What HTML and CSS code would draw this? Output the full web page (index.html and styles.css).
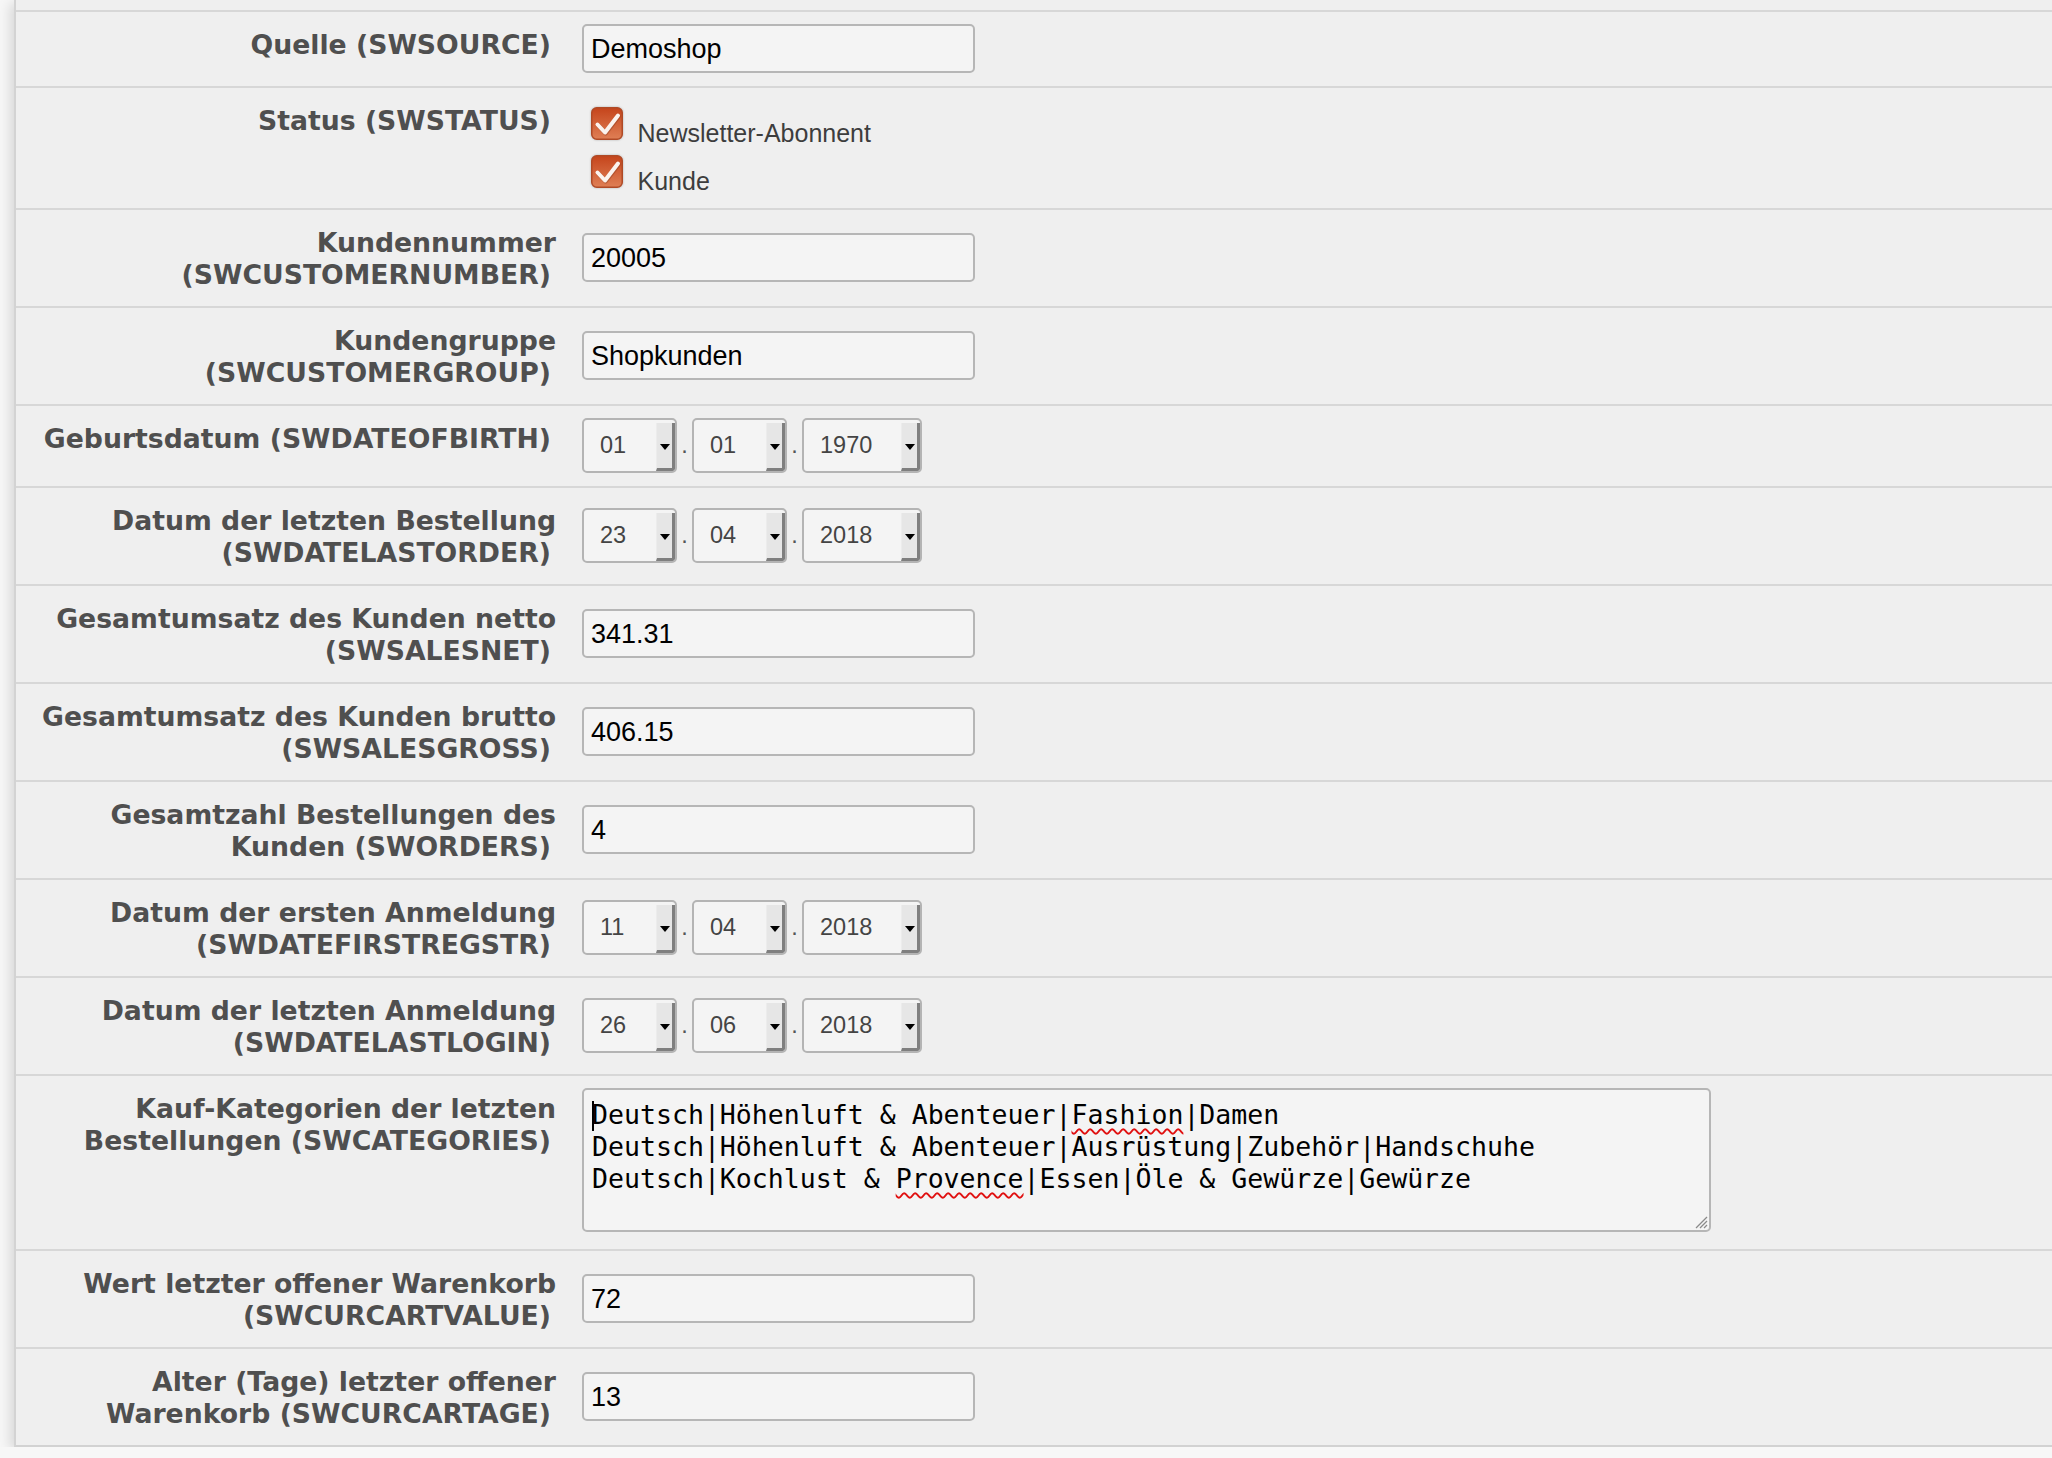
FILE: index.html
```html
<!DOCTYPE html>
<html lang="de">
<head>
<meta charset="utf-8">
<title>Kundenattribute</title>
<link rel="stylesheet" href="styles.css">
</head>
<body>
<div class="panel">
  <div class="row">
    <div class="lbl"><span>Quelle (SWSOURCE)</span></div>
    <div class="field"><input class="inp" type="text" value="Demoshop" readonly></div>
  </div>
  <div class="row">
    <div class="lbl"><span>Status (SWSTATUS)</span></div>
    <div class="field checks">
      <div class="check">
        <svg class="cb" viewBox="0 0 32 33"><defs><linearGradient id="cbg" x1="0" y1="0" x2="0" y2="1"><stop offset="0" stop-color="#c5441b"/><stop offset="1" stop-color="#df7f55"/></linearGradient></defs><rect x="0.75" y="0.75" width="30.5" height="31.5" rx="5" fill="url(#cbg)" stroke="#b04a26" stroke-width="1.5"/><path d="M6.5 17.5 L14 25.5 L27 8.5" fill="none" stroke="#7a3418" stroke-opacity="0.35" stroke-width="4.5" stroke-linecap="round" stroke-linejoin="round" transform="translate(0.6 0.8)"/><path d="M6.5 17.5 L14 25.5 L27 8.5" fill="none" stroke="#fbf3ee" stroke-width="4" stroke-linecap="round" stroke-linejoin="round"/></svg>
        <span class="ctext">Newsletter-Abonnent</span>
      </div>
      <div class="check">
        <svg class="cb" viewBox="0 0 32 33"><rect x="0.75" y="0.75" width="30.5" height="31.5" rx="5" fill="url(#cbg)" stroke="#b04a26" stroke-width="1.5"/><path d="M6.5 17.5 L14 25.5 L27 8.5" fill="none" stroke="#7a3418" stroke-opacity="0.35" stroke-width="4.5" stroke-linecap="round" stroke-linejoin="round" transform="translate(0.6 0.8)"/><path d="M6.5 17.5 L14 25.5 L27 8.5" fill="none" stroke="#fbf3ee" stroke-width="4" stroke-linecap="round" stroke-linejoin="round"/></svg>
        <span class="ctext">Kunde</span>
      </div>
    </div>
  </div>
  <div class="row">
    <div class="lbl"><span>Kundennummer (SWCUSTOMERNUMBER)</span></div>
    <div class="field"><input class="inp" type="text" value="20005" readonly></div>
  </div>
  <div class="row">
    <div class="lbl"><span>Kundengruppe (SWCUSTOMERGROUP)</span></div>
    <div class="field"><input class="inp" type="text" value="Shopkunden" readonly></div>
  </div>
  <div class="row">
    <div class="lbl"><span>Geburtsdatum (SWDATEOFBIRTH)</span></div>
    <div class="field date">
      <div class="sel w"><span class="v">01</span><span class="btn"><i class="tri"></i></span></div><span class="dot">.</span><div class="sel w"><span class="v">01</span><span class="btn"><i class="tri"></i></span></div><span class="dot">.</span><div class="sel y"><span class="v">1970</span><span class="btn"><i class="tri"></i></span></div>
    </div>
  </div>
  <div class="row">
    <div class="lbl"><span>Datum der letzten Bestellung (SWDATELASTORDER)</span></div>
    <div class="field date">
      <div class="sel w"><span class="v">23</span><span class="btn"><i class="tri"></i></span></div><span class="dot">.</span><div class="sel w"><span class="v">04</span><span class="btn"><i class="tri"></i></span></div><span class="dot">.</span><div class="sel y"><span class="v">2018</span><span class="btn"><i class="tri"></i></span></div>
    </div>
  </div>
  <div class="row">
    <div class="lbl"><span>Gesamtumsatz des Kunden netto (SWSALESNET)</span></div>
    <div class="field"><input class="inp" type="text" value="341.31" readonly></div>
  </div>
  <div class="row">
    <div class="lbl"><span>Gesamtumsatz des Kunden brutto (SWSALESGROSS)</span></div>
    <div class="field"><input class="inp" type="text" value="406.15" readonly></div>
  </div>
  <div class="row">
    <div class="lbl"><span>Gesamtzahl Bestellungen des Kunden (SWORDERS)</span></div>
    <div class="field"><input class="inp" type="text" value="4" readonly></div>
  </div>
  <div class="row">
    <div class="lbl"><span>Datum der ersten Anmeldung (SWDATEFIRSTREGSTR)</span></div>
    <div class="field date">
      <div class="sel w"><span class="v">11</span><span class="btn"><i class="tri"></i></span></div><span class="dot">.</span><div class="sel w"><span class="v">04</span><span class="btn"><i class="tri"></i></span></div><span class="dot">.</span><div class="sel y"><span class="v">2018</span><span class="btn"><i class="tri"></i></span></div>
    </div>
  </div>
  <div class="row">
    <div class="lbl"><span>Datum der letzten Anmeldung (SWDATELASTLOGIN)</span></div>
    <div class="field date">
      <div class="sel w"><span class="v">26</span><span class="btn"><i class="tri"></i></span></div><span class="dot">.</span><div class="sel w"><span class="v">06</span><span class="btn"><i class="tri"></i></span></div><span class="dot">.</span><div class="sel y"><span class="v">2018</span><span class="btn"><i class="tri"></i></span></div>
    </div>
  </div>
  <div class="row">
    <div class="lbl"><span>Kauf-Kategorien der letzten Bestellungen (SWCATEGORIES)</span></div>
    <div class="field">
      <div class="ta">
        <div class="ln"><i class="caret"></i>Deutsch|Höhenluft &amp; Abenteuer|<u class="sp">Fashion</u>|Damen</div>
        <div class="ln">Deutsch|Höhenluft &amp; Abenteuer|Ausrüstung|Zubehör|Handschuhe</div>
        <div class="ln">Deutsch|Kochlust &amp; <u class="sp">Provence</u>|Essen|Öle &amp; Gewürze|Gewürze</div>
        <svg class="grip" viewBox="0 0 16 16"><path d="M15 4 L4 15 M15 8 L8 15 M15 12 L12 15" stroke="#8a8a8a" stroke-width="1.3" fill="none"/></svg>
      </div>
    </div>
  </div>
  <div class="row">
    <div class="lbl"><span>Wert letzter offener Warenkorb (SWCURCARTVALUE)</span></div>
    <div class="field"><input class="inp" type="text" value="72" readonly></div>
  </div>
  <div class="row">
    <div class="lbl"><span>Alter (Tage) letzter offener Warenkorb (SWCURCARTAGE)</span></div>
    <div class="field"><input class="inp" type="text" value="13" readonly></div>
  </div>
</div>
</body>
</html>
```
FILE: styles.css
```css
html, body {
  margin: 0;
  padding: 0;
}
body {
  background: #f7f7f7;
  font-family: "Liberation Sans", Arial, sans-serif;
  overflow: hidden;
}
.panel {
  margin-left: 14px;
  padding-top: 10px;
  background: #efefef;
  border-left: 2px solid #d3d3d3;
  border-bottom: 2px solid #d2d2d2;
  box-shadow: -4px 3px 12px rgba(0, 0, 0, 0.13);
}
.row {
  display: flex;
  align-items: center;
  border-top: 2px solid #d7d7d7;
  padding: 12px 0 13px;
}
.lbl {
  flex: 0 0 540px;
  box-sizing: border-box;
  align-self: flex-start;
  padding: 5px 0 3px 5px;
  text-align: right;
  font-family: "DejaVu Sans", sans-serif;
  font-weight: bold;
  font-size: 26.7px;
  line-height: 31.5px;
  color: #4f4f4f;
}
.lbl span {
  padding-right: 5px;
}
.field {
  margin-left: 26px;
}
.inp {
  display: block;
  box-sizing: border-box;
  width: 393px;
  height: 49px;
  margin: 0;
  padding: 2px 0 0 7px;
  border: 2px solid #b6b6b6;
  border-radius: 5px;
  background: #f4f4f4;
  font-family: "Liberation Sans", Arial, sans-serif;
  font-size: 27px;
  color: #000;
  outline: none;
}
.checks {
  display: flex;
  flex-direction: column;
  padding-left: 9px;
}
.check {
  height: 47.5px;
  display: flex;
  align-items: center;
}
.cb {
  width: 32px;
  height: 33px;
  flex: 0 0 auto;
  filter: drop-shadow(0 0 1px rgba(0, 0, 0, 0.25));
}
.ctext {
  margin-left: 14.5px;
  padding-top: 20px;
  font-size: 25px;
  color: #3d3d3d;
}
.date {
  display: flex;
  align-items: baseline;
}
.sel {
  display: flex;
  align-items: center;
  box-sizing: border-box;
  height: 55px;
  border: 2px solid #b4b4b4;
  border-radius: 5px;
  background: #f4f4f4;
  padding-left: 16px;
  font-size: 23.5px;
  color: #444;
  overflow: hidden;
}
.sel.w {
  width: 95px;
}
.sel.y {
  width: 120px;
}
.sel .v {
  flex: 1;
}
.sel .btn {
  align-self: stretch;
  margin-top: 3px;
  width: 15px;
  background: #e6e6e6;
  border-left: 1px solid #ececec;
  border-right: 3px solid #7f7f7f;
  border-bottom: 3px solid #7f7f7f;
  border-bottom-right-radius: 3px;
  display: flex;
  align-items: center;
  justify-content: center;
}
.tri {
  display: block;
  width: 0;
  height: 0;
  border-left: 5px solid transparent;
  border-right: 5px solid transparent;
  border-top: 6px solid #000;
  margin-top: 2px;
}
.dot {
  width: 15px;
  text-align: center;
  font-size: 23.5px;
  color: #555;
}
.ta {
  position: relative;
  box-sizing: border-box;
  width: 1129px;
  height: 144px;
  margin-bottom: 4px;
  padding: 9px 8px 0;
  border: 2px solid #b6b6b6;
  border-radius: 5px;
  background: #f4f4f4;
  font-family: "DejaVu Sans Mono", monospace;
  font-size: 26.55px;
  line-height: 32px;
  color: #000;
}
.ln {
  height: 32px;
  white-space: pre;
}
.caret {
  display: inline-block;
  width: 2px;
  height: 30px;
  margin-right: -2px;
  vertical-align: -7px;
  background: #000;
}
.sp {
  text-decoration: underline wavy #e01010;
  text-decoration-thickness: 1.5px;
  text-underline-offset: 4px;
}
.grip {
  position: absolute;
  right: 1px;
  bottom: 1px;
  width: 16px;
  height: 16px;
}
```
